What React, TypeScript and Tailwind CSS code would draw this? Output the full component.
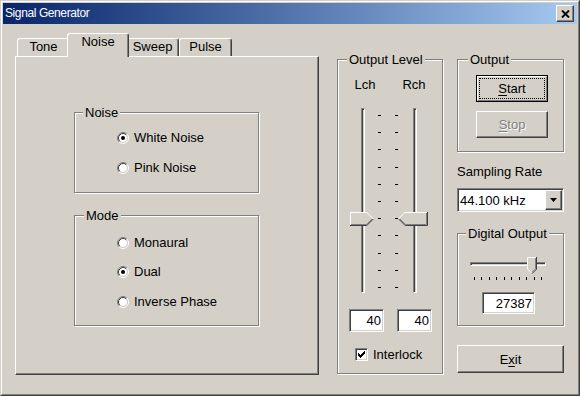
const raised =
  "border border-t-white border-l-white border-r-[#404040] border-b-[#404040] shadow-[inset_-1px_-1px_0_#808080]";
const sunken =
  "border border-t-[#808080] border-l-[#808080] border-r-white border-b-white shadow-[inset_1px_1px_0_#404040,inset_-1px_-1px_0_#d4d0c8]";
const etched = "border border-[#808080] shadow-[inset_1px_1px_0_#fff,1px_1px_0_#fff]";

function Radio({ checked = false }: { checked?: boolean }) {
  return (
    <svg width="12" height="12" viewBox="0 0 12 12" className="shrink-0">
      <circle cx="6" cy="6" r="4" fill="#fff" />
      <path d="M2.11 9.89 A5.5 5.5 0 0 1 9.89 2.11" fill="none" stroke="#808080" />
      <path d="M9.89 2.11 A5.5 5.5 0 0 1 2.11 9.89" fill="none" stroke="#fff" />
      <path d="M2.82 9.18 A4.5 4.5 0 0 1 9.18 2.82" fill="none" stroke="#404040" />
      <path d="M9.18 2.82 A4.5 4.5 0 0 1 2.82 9.18" fill="none" stroke="#d4d0c8" />
      {checked && <circle cx="6" cy="6" r="2" fill="#000" />}
    </svg>
  );
}

function RadioRow({ label, checked, className = "" }: { label: string; checked?: boolean; className?: string }) {
  return (
    <div className={`flex items-center gap-[5px] h-[15px] ${className}`}>
      <Radio checked={checked} />
      <span>{label}</span>
    </div>
  );
}

function Check() {
  return (
    <span className={`w-[13px] h-[13px] bg-white flex items-center justify-center ${sunken}`}>
      <svg width="7" height="7" viewBox="0 0 7 7" shapeRendering="crispEdges">
        <path d="M0 2h1v3H0z M1 3h1v3H1z M2 4h1v3H2z M3 3h1v3H3z M4 2h1v3H4z M5 1h1v3H5z M6 0h1v3H6z" fill="#000" />
      </svg>
    </span>
  );
}

function Group({
  label,
  labelPos,
  className = "",
  children,
}: {
  label: string;
  labelPos: string;
  className?: string;
  children?: React.ReactNode;
}) {
  return (
    <div className={`relative ${etched} ${className}`}>
      <span className={`absolute -top-[8px] px-[2px] bg-[#d4d0c8] leading-[15px] whitespace-nowrap ${labelPos}`}>
        {label}
      </span>
      {children}
    </div>
  );
}

function Edit({ value, className = "" }: { value: string; className?: string }) {
  return <div className={`bg-white flex items-center justify-end pr-[2px] ${sunken} ${className}`}>{value}</div>;
}

function VTrack() {
  return (
    <div className="w-[4px] h-[185px] border border-t-[#808080] border-l-[#808080] border-r-white border-b-white shadow-[inset_1px_1px_0_#404040]" />
  );
}

function VTicks() {
  return (
    <div className="mt-[7px] h-[173px] flex flex-col justify-between">
      {Array.from({ length: 11 }).map((_, i) => (
        <div key={i} className="w-[3px] h-[1px] bg-black" />
      ))}
    </div>
  );
}

function Key({ children }: { children: React.ReactNode }) {
  return <span className="underline decoration-1 underline-offset-[2px]">{children}</span>;
}

export default function App() {
  return (
    <div className="w-[580px] h-[396px] bg-[#d4d0c8] border border-t-[#d4d0c8] border-l-[#d4d0c8] border-r-[#404040] border-b-[#404040] text-[13px] leading-[15px] text-black font-[family-name:'Liberation_Sans',Arial,sans-serif]">
      <div className="h-full flex flex-col p-[1px] border border-t-white border-l-white border-r-[#808080] border-b-[#808080]">
        {/* title bar */}
        <div className="h-[21px] shrink-0 flex items-center justify-between pl-[2px] pr-[3px] bg-linear-to-r from-[#0a246a] to-[#a6caf0]">
          <span className="text-white text-[12px] tracking-[-0.4px]">Signal Generator</span>
          <div className={`w-[18px] h-[17px] bg-[#d4d0c8] flex items-center justify-center ${raised}`}>
            <svg width="9" height="8" viewBox="0 0 9 8">
              <path d="M1 0.5 L8 7.5 M8 0.5 L1 7.5" stroke="#000" strokeWidth="1.9" />
            </svg>
          </div>
        </div>

        <div className="flex items-start pt-[9px] pl-[12px]">
          {/* tabs */}
          <div className="flex flex-col w-[304px]">
            <div className="flex items-end h-[23px] pl-[2px]">
              <div className="w-[52px] h-[18px] flex justify-center rounded-tl-[3px] border-l border-t border-l-white border-t-white">
                Tone
              </div>
              <div className="relative z-10 -mx-[2px] -mb-[1px] w-[62px] h-[24px] flex justify-center bg-[#d4d0c8] rounded-t-[3px] border-l border-t border-r border-l-white border-t-white border-r-[#404040] shadow-[inset_-1px_0_0_#808080]">
                Noise
              </div>
              <div className="w-[52px] h-[18px] flex justify-center rounded-tr-[3px] border-t border-r border-t-white border-r-[#404040] shadow-[inset_-1px_0_0_#808080]">
                Sweep
              </div>
              <div className="w-[53px] h-[18px] flex justify-center rounded-t-[3px] border-l border-t border-r border-l-white border-t-white border-r-[#404040] shadow-[inset_-1px_0_0_#808080]">
                Pulse
              </div>
            </div>
            <div className={`h-[319px] pt-[55px] pl-[58px] ${raised}`}>
              <Group label="Noise" labelPos="left-[8px]" className="w-[185px] h-[81px] pt-[17px] pl-[42px]">
                <RadioRow label="White Noise" checked />
                <RadioRow label="Pink Noise" className="mt-[15px]" />
              </Group>
              <Group label="Mode" labelPos="left-[9px]" className="mt-[22px] w-[185px] h-[111px] pt-[19px] pl-[42px]">
                <RadioRow label="Monaural" />
                <RadioRow label="Dual" checked className="mt-[14px]" />
                <RadioRow label="Inverse Phase" className="mt-[15px]" />
              </Group>
            </div>
          </div>

          {/* output level */}
          <Group label="Output Level" labelPos="left-[9px]" className="ml-[18px] mt-[26px] w-[106px] h-[315px]">
            <div className="flex pl-[3px] pt-[17px]">
              <span className="w-[48px] text-center">Lch</span>
              <span className="w-[50px] text-center">Rch</span>
            </div>
            <div className="relative mt-[16px] flex h-[185px]">
              <div className="ml-[23px]">
                <VTrack />
              </div>
              <div className="ml-[13px]">
                <VTicks />
              </div>
              <div className="ml-[14px]">
                <VTicks />
              </div>
              <div className="ml-[15px]">
                <VTrack />
              </div>
              <svg width="24" height="14" viewBox="0 0 24 14" className="absolute left-[12px] top-[104px]">
                <polygon points="0,0 17,0 24,7 17,14 0,14" fill="#d4d0c8" />
                <polyline points="0.5,13.5 0.5,0.5 16.8,0.5 23,6.7" fill="none" stroke="#fff" />
                <polyline points="23.3,7 16.8,13.5 0,13.5" fill="none" stroke="#404040" />
                <polyline points="1,12.5 16.4,12.5 22,7" fill="none" stroke="#808080" />
              </svg>
              <svg width="30" height="14" viewBox="0 0 30 14" className="absolute left-[60px] top-[104px]">
                <polygon points="30,0 7,0 0,7 7,14 30,14" fill="#d4d0c8" />
                <polyline points="0.7,6.7 6.8,0.5 29.5,0.5" fill="none" stroke="#fff" />
                <polyline points="29.5,0 29.5,13.5 7.2,13.5 0.7,7" fill="none" stroke="#404040" />
                <polyline points="28.5,1 28.5,12.5 7.6,12.5 2,7" fill="none" stroke="#808080" />
              </svg>
            </div>
            <div className="mt-[16px] flex gap-[13px] pl-[11px]">
              <Edit value="40" className="w-[35px] h-[23px]" />
              <Edit value="40" className="w-[35px] h-[23px]" />
            </div>
            <div className="mt-[15px] ml-[17px] flex items-center gap-[5px] h-[15px]">
              <Check />
              <span>Interlock</span>
            </div>
          </Group>

          {/* right column */}
          <div className="ml-[14px] mt-[26px] w-[107px] flex flex-col">
            <Group label="Output" labelPos="left-[10px]" className="h-[93px] pt-[15px] pl-[18px]">
              <div className="w-[72px] h-[27px] border border-black">
                <div className="h-full p-[1px] border border-t-white border-l-white border-r-[#808080] border-b-[#808080]">
                  <div className="h-full border border-dotted border-black flex items-center justify-center">
                    <span>
                      <Key>S</Key>tart
                    </span>
                  </div>
                </div>
              </div>
              <div className={`mt-[9px] w-[72px] h-[27px] flex items-center justify-center text-[#808080] [text-shadow:1px_1px_0_#fff] ${raised}`}>
                <span>
                  <Key>S</Key>top
                </span>
              </div>
            </Group>

            <span className="mt-[12px]">Sampling Rate</span>
            <div className={`mt-[9px] h-[24px] p-[1px] bg-white flex items-center ${sunken}`}>
              <span className="flex-1 pl-[1px]">44.100 kHz</span>
              <div className={`w-[17px] h-[20px] bg-[#d4d0c8] flex items-center justify-center ${raised}`}>
                <svg width="7" height="4" viewBox="0 0 7 4">
                  <polygon points="0,0 7,0 3.5,4" fill="#000" />
                </svg>
              </div>
            </div>

            <Group label="Digital Output" labelPos="left-[8px]" className="mt-[21px] h-[93px]">
              <div className="relative ml-[12px] mt-[28px] w-[76px]">
                <div className="h-[4px] border border-t-[#808080] border-l-[#808080] border-r-white border-b-white shadow-[inset_1px_1px_0_#404040]" />
                <div className="mt-[11px] ml-[4px] w-[68px] flex justify-between">
                  {Array.from({ length: 10 }).map((_, i) => (
                    <div key={i} className="w-[1px] h-[3px] bg-black" />
                  ))}
                </div>
                <svg width="10" height="17" viewBox="0 0 10 17" className="absolute left-[57px] -top-[5px]">
                  <polygon points="0,0 10,0 10,12 5,17 0,12" fill="#d4d0c8" />
                  <polyline points="5,16.5 0.5,12 0.5,0.5 9.5,0.5" fill="none" stroke="#fff" />
                  <polyline points="9.5,0 9.5,12.2 5,16.7" fill="none" stroke="#404040" />
                  <polyline points="8.5,1 8.5,11.8 5,15.3" fill="none" stroke="#808080" />
                </svg>
              </div>
              <Edit value="27387" className="ml-[24px] mt-[12px] w-[53px] h-[22px]" />
            </Group>

            <div className={`mt-[19px] h-[28px] flex items-center justify-center ${raised}`}>
              <span>
                E<Key>x</Key>it
              </span>
            </div>
          </div>
        </div>
      </div>
    </div>
  );
}
